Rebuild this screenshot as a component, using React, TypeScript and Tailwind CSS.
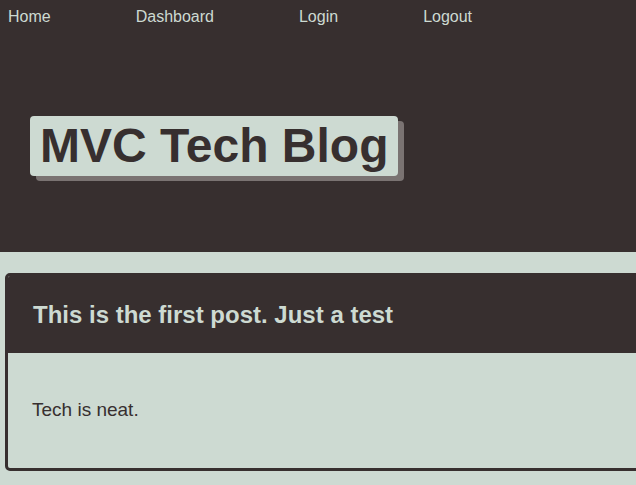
import React from 'react'

const links = ['Home', 'Dashboard', 'Login', 'Logout']

const App = () => {
  return (
    <div className="min-h-[485px] w-[636px] overflow-hidden bg-[#cddad2] font-['Liberation_Sans',Arial,sans-serif]">
      <header className="h-[252px] bg-[#372f2f]">
        <nav className="flex flex-row gap-[85px] pl-2 pt-[8px]">
          {links.map((l) => (
            <a key={l} href="#" className="text-base leading-[18px] text-[#cddad2]">
              {l}
            </a>
          ))}
        </nav>
        <div className="pl-[30px] pt-[90px]">
          <h1 className="inline-block rounded-[4px] bg-[#cddad2] px-[10px] py-[2px] text-[48px] font-bold leading-[56px] text-[#372f2f] shadow-[6px_5px_0_#7a7372]">
            MVC Tech Blog
          </h1>
        </div>
      </header>
      <main className="pt-[21px] pl-[5px]">
        <article className="w-[700px] overflow-hidden rounded-[5px] border-[3px] border-[#372f2f]">
          <div className="bg-[#372f2f] px-[25px] py-[25px]">
            <h2 className="text-2xl font-bold leading-[27px] text-[#cddad2]">This is the first post. Just a test</h2>
          </div>
          <div className="px-[24px] pt-[46px] pb-[47px]">
            <p className="text-[19px] leading-[22px] text-[#372f2f]">Tech is neat.</p>
          </div>
        </article>
      </main>
    </div>
  )
}

export default App
